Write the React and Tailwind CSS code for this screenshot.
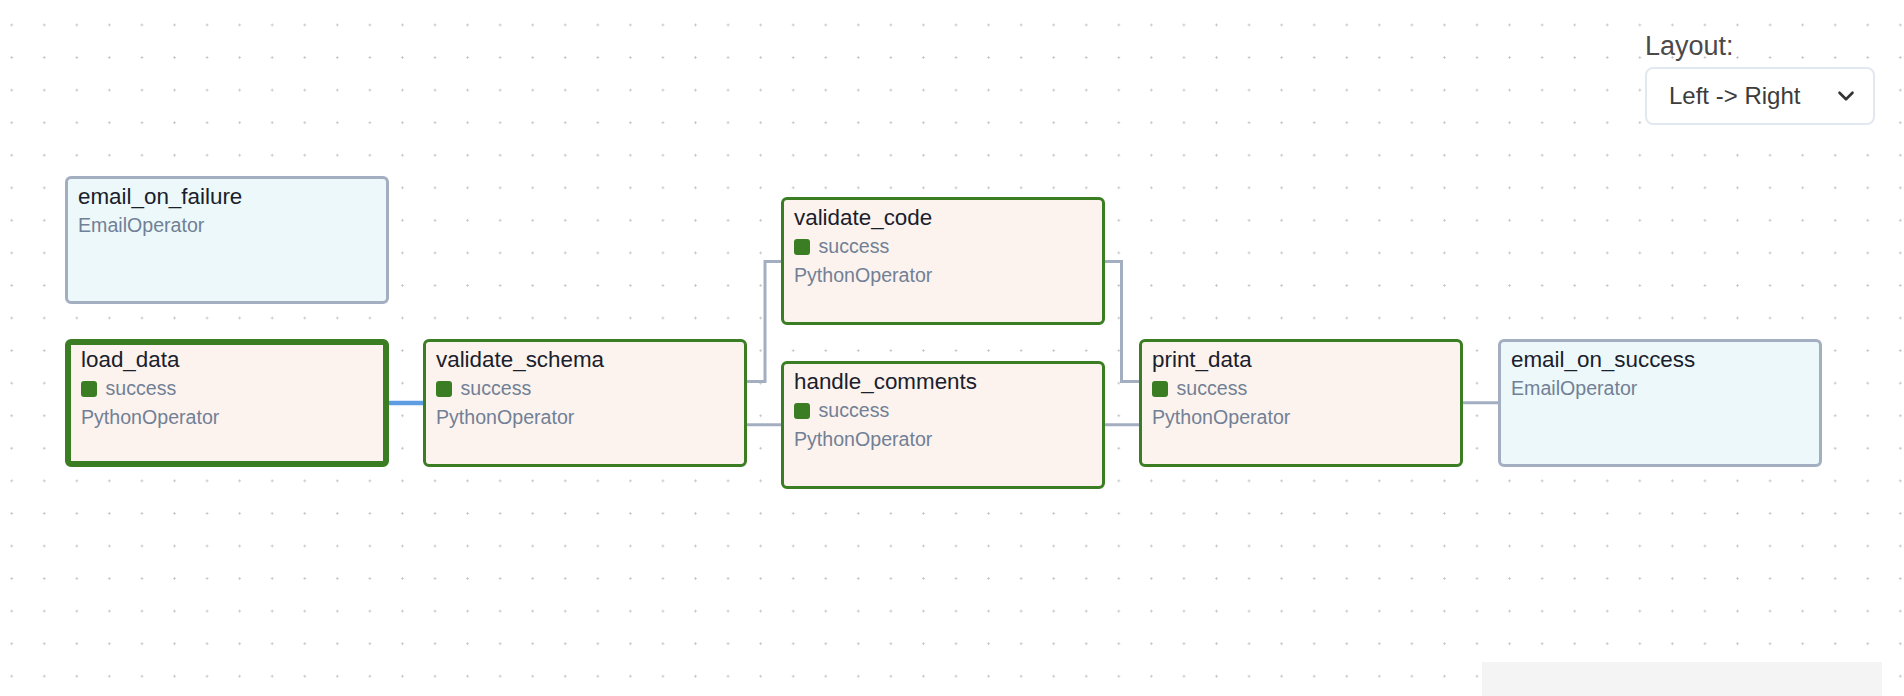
import React from "react";
import { ChevronDown } from "lucide-react";

const nodes = [
  { id: "email_on_failure", op: "EmailOperator", x: 65, y: 176, kind: "email" },
  { id: "load_data", op: "PythonOperator", x: 65, y: 339, kind: "python", selected: true },
  { id: "validate_schema", op: "PythonOperator", x: 423, y: 339, kind: "python" },
  { id: "validate_code", op: "PythonOperator", x: 781, y: 197, kind: "python" },
  { id: "handle_comments", op: "PythonOperator", x: 781, y: 361, kind: "python" },
  { id: "print_data", op: "PythonOperator", x: 1139, y: 339, kind: "python" },
  { id: "email_on_success", op: "EmailOperator", x: 1498, y: 339, kind: "email" },
];

const edges = [
  "M747 381.5 H765 V261.5 H781",
  "M747 424.8 H781",
  "M1105 261.5 H1121.5 V381.5 H1139",
  "M1105 424.8 H1139",
  "M1463 402.8 H1498",
];

function TaskNode({ node }) {
  const isEmail = node.kind === "email";
  const border = isEmail
    ? "border-[3px] border-[#a3afc1] bg-[#ecf8f9]"
    : node.selected
    ? "border-[6px] border-[#3b7d23] bg-[#fcf3ee]"
    : "border-[3px] border-[#3b7d23] bg-[#fcf3ee]";

  return (
    <div
      className={`absolute w-[324px] h-[128px] rounded-[6px] pl-[10px] ${border} ${
        node.selected ? "pt-0" : "pt-[3px]"
      }`}
      style={{ left: node.x, top: node.y }}
    >
      <div className="text-[22.4px] leading-[29px] text-[#1a202c]">{node.id}</div>
      {!isEmail && (
        <div className="flex items-center gap-[9px] h-[29px] pt-[1px]">
          <span className="w-[15.5px] h-[15.5px] rounded-[3px] bg-[#3b7d23]" />
          <span className="text-[19.6px] text-[#718096]">success</span>
        </div>
      )}
      <div className="text-[19.6px] leading-[28px] text-[#718096]">{node.op}</div>
    </div>
  );
}

export default function App() {
  return (
    <div
      className="relative w-[1904px] h-[696px] overflow-hidden bg-white bg-[radial-gradient(circle,#c2c2c2_0.9px,transparent_1.3px)] bg-[length:32.57px_32.57px] bg-[position:-4.6px_8.7px]"
      style={{ fontFamily: '"Liberation Sans", Arial, sans-serif' }}
    >
      {/* edges */}
      <svg className="absolute inset-0" width="1904" height="696" fill="none">
        <path d="M389 403 H423" stroke="#5f9de3" strokeWidth="4.5" strokeLinecap="round" />
        {edges.map((d) => (
          <path key={d} d={d} stroke="#a3afc1" strokeWidth="3" />
        ))}
      </svg>

      {nodes.map((n) => (
        <TaskNode key={n.id} node={n} />
      ))}

      {/* layout picker */}
      <div className="absolute top-[30px] right-[29px] flex flex-col">
        <label className="text-[27px] leading-[32px] text-[#4a4a4a]">Layout:</label>
        <div className="mt-[5px] w-[230px] h-[58px] flex items-center justify-between border-2 border-[#e2e8f0] rounded-[8px] bg-white pl-[22px] pr-[14px]">
          <span className="text-[24px] text-[#3c3c3c]">Left -&gt; Right</span>
          <ChevronDown size={26} strokeWidth={2.4} className="text-[#333]" />
        </div>
      </div>

      {/* minimap stub */}
      <div className="absolute left-[1482px] top-[662px] w-[400px] h-[40px] bg-[#f4f4f4]" />
    </div>
  );
}
